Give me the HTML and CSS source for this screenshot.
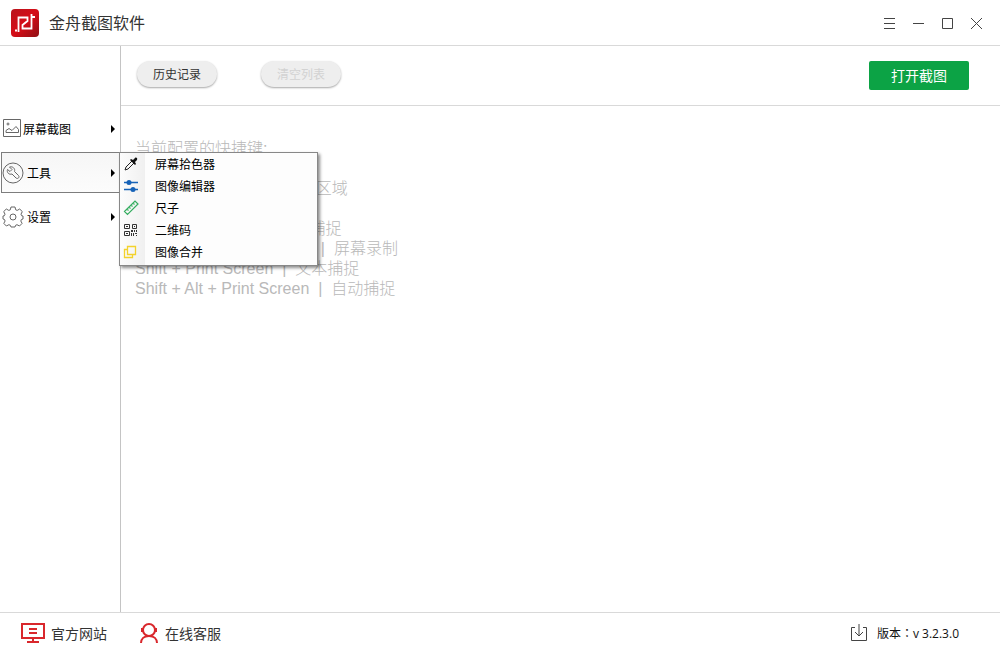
FILE: index.html
```html
<!doctype html>
<html lang="zh-CN">
<head>
	<meta charset="utf-8" />
	<meta name="viewport" content="width=device-width, initial-scale=1" />
	<title>金舟截图软件</title>
	<link rel="stylesheet" href="styles.css">
</head>
<body>
	<header class="titlebar">
		<svg class="logo" viewBox="0 0 28 28">
			<defs>
				<linearGradient id="logoFill" x1="0" y1="0" x2="1" y2="1">
					<stop offset="0" stop-color="#b8141c" />
					<stop offset="0.5" stop-color="#d60d17" />
					<stop offset="1" stop-color="#8e1015" />
				</linearGradient>
			</defs>
			<rect width="28" height="28" rx="4" fill="url(#logoFill)" />
			<path d="M4 21.500h2M7.500 23V8.500h9v3.500l-5 4v3.500h9V5M21 8h3" fill="none" stroke="#fff" stroke-width="1.800" />
		</svg>
		<h1>金舟截图软件</h1>
		<div class="winButtons">
			<button type="button" aria-label="菜单"><svg viewBox="0 0 13 13"><path d="M1 1.500h11M1 6.500h11M1 11.500h11" /></svg></button>
			<button type="button" aria-label="最小化"><svg viewBox="0 0 13 13"><path d="M1 6.500h11" /></svg></button>
			<button type="button" aria-label="最大化"><svg viewBox="0 0 13 13"><path d="M1.500 1.500h10v10h-10z" /></svg></button>
			<button type="button" aria-label="关闭"><svg viewBox="0 0 13 13"><path d="M1 1l11 11M12 1L1 12" /></svg></button>
		</div>
	</header>

	<div class="middle">
		<nav class="sidebar">
			<button type="button" class="navItem shots">
				<svg class="navIcon" viewBox="0 0 22 22"><path d="M2.500 1.500h17v17h-17zM5 14.500v-2l3-2 3 2 4-4 2.500 3v3z" /><circle cx="7" cy="6" r="1" /></svg>
				<span>屏幕截图</span>
			</button>
			<div class="navGroup">
				<button type="button" class="navItem active">
					<svg class="navIcon" viewBox="0 0 22 22"><circle cx="11" cy="11" r="10" /><path d="M5.500 7.500l2.500 2 2-2-2.500-2.500c3-1 6 1.500 5 4.500l4 4c1.500 1.500-.5 4-2.500 2.500l-4-4c-3 1-5.500-1.500-4.500-4.500z" /></svg>
					<span>工具</span>
				</button>
				<div class="menu">
					<button type="button"><svg viewBox="0 0 16 16"><path d="M2 14l1-3 6-6 2 2-6 6z" fill="none" stroke="#222" /><path d="M7 4l5 5 1-1-1-2 2-2c1-2-1-3-2-2l-2 2-2-1z" fill="#111" /></svg>屏幕拾色器</button>
					<button type="button"><svg viewBox="0 0 16 16"><path d="M1 4.500h14M1 11.500h14" stroke="#1763b8" stroke-width="1.500" /><circle cx="6" cy="4.500" r="2.500" fill="#1763b8" /><circle cx="10" cy="11.500" r="2.500" fill="#1763b8" /></svg>图像编辑器</button>
					<button type="button"><svg viewBox="0 0 16 16"><path d="M1.500 11.500L12 1l3 3L4.500 14.500zM4 9l1.500 1.500M6 7l1.500 1.500M8 5l1.500 1.500M10 3l1.500 1.500" fill="none" stroke="#35ad60" stroke-width="1.200" /></svg>尺子</button>
					<button type="button"><svg viewBox="0 0 16 16"><path d="M1.500 2.500h5v4h-5zM9.500 2.500h4v4h-4zM1.500 9.500h5v4h-5z" fill="none" stroke="#333" /><path d="M3 4h2v1H3zM11 4h1v1h-1zM3 11h2v1H3zM8 8h2v2H8zM11 8h1v2h-1zM13 8h1v2h-1zM8 11h1v3H8zM10 11h1v3h-1zM12 11h2v1h-2zM13 13h1v1h-1z" fill="#333" /></svg>二维码</button>
					<button type="button"><svg viewBox="0 0 16 16"><path d="M4.500 2.500h8v8h-8zM4 5.500H1.500v8h8V11" fill="none" stroke="#f3d22c" stroke-width="1.300" /></svg>图像合并</button>
				</div>
			</div>
			<button type="button" class="navItem">
				<svg class="navIcon" viewBox="0 0 22 22"><path d="M9 1h4l.7 2.800 1.500.6L17.700 3l2.600 2.600-1.300 2.600.6 1.500L21 10v3l-1.600.5-.6 1.500 1.300 2.400-2.600 2.600-2.500-1.300-1.400.6L13 21H9l-.7-1.700-1.400-.6L4.400 20l-2.600-2.600L3.100 15l-.6-1.500L1 13v-3l1.400-.3.6-1.500-1.300-2.600L4.300 3l2.500 1.400 1.500-.6z" stroke-linejoin="round" /><circle cx="11" cy="11" r="3" /></svg>
				<span>设置</span>
			</button>
		</nav>

		<main class="content">
			<div class="toolbar">
				<button type="button" class="pill">历史记录</button>
				<button type="button" class="pill" disabled>清空列表</button>
				<button type="button" class="openBtn">打开截图</button>
			</div>
			<div class="hotkeys">
				<p>当前配置的快捷键:</p>
				<p></p>
				<p>Ctrl + Print Screen | &nbsp;选择区域</p>
				<p></p>
				<p>Alt + Print Screen | &nbsp;窗口捕捉</p>
				<p>Ctrl + Shift + Print Screen | &nbsp;屏幕录制</p>
				<p>Shift + Print Screen &nbsp;| &nbsp;文本捕捉</p>
				<p>Shift + Alt + Print Screen &nbsp;| &nbsp;自动捕捉</p>
			</div>
		</main>
	</div>

	<footer class="statusbar">
		<a href="#"><svg class="site" viewBox="0 0 24 20"><path d="M1 1h22v14H1zM12 15v4M6 19h12M8 6h8M8 10h8" /></svg>官方网站</a>
		<a href="#"><svg class="service" viewBox="0 0 20 20"><circle cx="10" cy="7" r="6" /><path d="M2 20c0-4 3-7 8-7s8 3 8 7M3 5v4M17 5v4" /></svg>在线客服</a>
		<span class="version"><svg viewBox="0 0 18 18"><path d="M5 3.500H1.500v13h15v-13H13M9 0v12M5 8l4 4 4-4" /></svg><span lang="zh-TW">版本：v 3.2.3.0</span></span>
	</footer>
</body>
</html>
```

FILE: styles.css
```css
* {
	box-sizing: border-box;
}
body {
	display: flex;
	flex-direction: column;
	min-height: 100vh;
	margin: 0;
	background-color: #fff;
	color: #333;
	font-family: "Liberation Sans", "Noto Sans CJK SC", sans-serif;
	font-size: 14px;
}
button {
	margin: 0;
	padding: 0;
	border: 0;
	background: none;
	color: inherit;
	font: inherit;
}
svg {
	flex: none;
}

/* title bar */
.titlebar {
	display: flex;
	align-items: center;
	height: 46px;
	padding: 0 17px 0 11px;
	border-bottom: 1px solid #d9d9d9;
}
.logo {
	width: 28px;
	height: 28px;
}
.titlebar h1 {
	margin: 0 0 0 10px;
	padding-bottom: 1px;
	font-size: 16px;
	font-weight: normal;
}
.winButtons {
	display: flex;
	gap: 16px;
	margin-left: auto;
	padding-top: 2px;
}
.winButtons svg {
	display: block;
	width: 13px;
	height: 13px;
	fill: none;
	stroke: #444;
}

.middle {
	display: flex;
	flex: 1;
}

/* left side */
.sidebar {
	width: 121px;
	padding-top: 62px;
	border-right: 1px solid #c4c4c4;
}
.navItem {
	display: flex;
	align-items: center;
	gap: 3px;
	width: 100%;
	height: 41px;
	padding: 0 5px 0 2px;
	color: #000;
	font-size: 12px;
}
.navItem::after {
	content: "";
	margin-left: auto;
	border: 4px solid transparent;
	border-left-color: #000;
	border-right: 0;
}
.navIcon {
	width: 22px;
	height: 22px;
	fill: none;
	stroke: #666;
}
.navItem.shots {
	gap: 0;
	padding-left: 1px;
}
.navGroup {
	position: relative;
	margin: 3px 0 3px 1px;
}
.navItem.active {
	padding: 0 4px 0 0;
	border: 1px solid #7d7d7d;
	background: linear-gradient(#f6f6f6, #fcfcfc);
}

/* fly-out menu */
.menu {
	position: absolute;
	z-index: 1;
	top: 0;
	left: 118px;
	width: 199px;
	padding-bottom: 2px;
	border: 1px solid #888;
	background: linear-gradient(to right, #fcfcfc, #f0f0f0 25px, #fdfdfd 25px);
	box-shadow: 2px 2px 3px rgba(0, 0, 0, 0.45);
}
.menu button {
	display: flex;
	align-items: center;
	gap: 16px;
	width: 100%;
	height: 22px;
	padding: 0 0 2px 3px;
	color: #000;
	font-size: 12px;
}
.menu svg {
	width: 16px;
	height: 16px;
	margin-top: 2px;
}

/* right side */
.content {
	flex: 1;
}
.toolbar {
	display: flex;
	align-items: flex-start;
	height: 60px;
	padding: 15px 31px 0 16px;
	border-bottom: 1px solid #d9d9d9;
}
.pill {
	width: 80px;
	height: 26px;
	margin-right: 44px;
	padding-bottom: 2px;
	border-radius: 13px;
	background-color: #eee;
	box-shadow: 0 1px 2px rgba(0, 0, 0, 0.35);
	font-size: 12px;
}
.pill:disabled {
	color: #d2d2d2;
}
.openBtn {
	width: 100px;
	height: 29px;
	margin-left: auto;
	padding-bottom: 1px;
	border-radius: 2px;
	background-color: #0ca345;
	color: #fff;
}
.hotkeys {
	padding: 33px 14px;
	color: #b9b9b9;
	font-size: 16px;
	font-weight: 300;
	line-height: 20px;
}
.hotkeys p {
	height: 20px;
	margin: 0;
}

/* bottom bar */
.statusbar {
	display: flex;
	align-items: center;
	gap: 32px;
	height: 38px;
	padding: 2px 41px 0 21px;
	border-top: 1px solid #d9d9d9;
}
.statusbar a,
.version {
	display: flex;
	align-items: center;
	gap: 6px;
	color: #333;
	text-decoration: none;
}
.statusbar svg {
	fill: none;
	stroke: #d9272c;
	stroke-width: 2;
}
.site {
	width: 24px;
	height: 20px;
}
.service {
	width: 20px;
	height: 20px;
}
.version {
	gap: 9px;
	margin-left: auto;
	color: #111;
	font-family: "Open Sans", "Noto Sans CJK TC", sans-serif;
	font-size: 12px;
}
.statusbar .version svg {
	width: 18px;
	height: 18px;
	stroke: #444;
	stroke-width: 1;
}
```
